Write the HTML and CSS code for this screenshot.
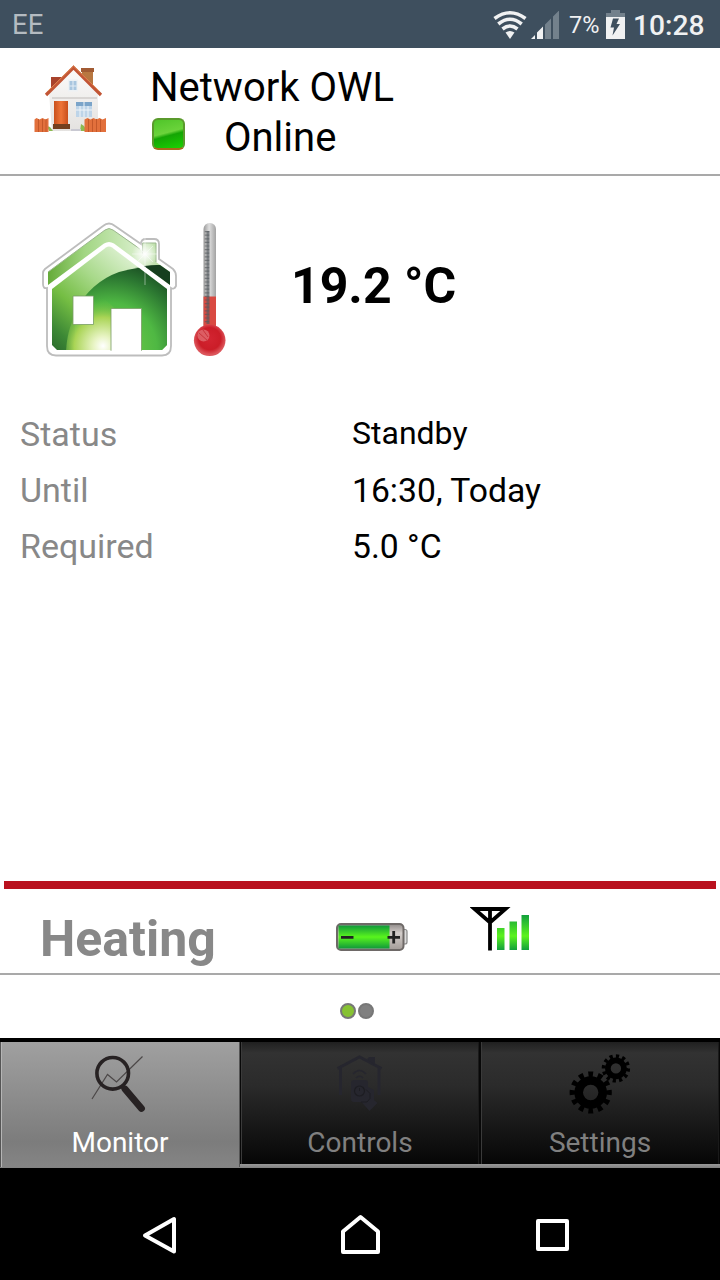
FILE: index.html
```html
<!DOCTYPE html>
<html>
<head>
	<meta charset="utf-8">
	<meta name="viewport" content="width=device-width, initial-scale=1.0">
	<title>Network OWL</title>
	<link rel="stylesheet" href="styles.css">
</head>
<body>
<div class="statusbar">
	<span class="carrier">EE</span>
	<svg class="wifi" width="36" height="30" viewBox="492 10 36 30">
		<g fill="none" stroke="#f0f1f2" stroke-width="3.6">
			<path d="M494.5 18.5Q510 7 525.500 18.500"/>
			<path d="M498.300 24Q510 14.500 521.700 24"/>
			<path d="M502.500 29Q510 23 517.500 29"/>
		</g>
		<path d="M505.500 32.500Q510 29.500 514.500 32.500L510 39z" fill="#f0f1f2"/>
	</svg>
	<svg class="cell" width="28" height="29" viewBox="531 11 28 29">
		<path d="M531 39L535 35V39zM537 39V32.500L543 26.500V39z" fill="#f0f1f2"/>
		<path d="M545 39V24.500L551 18.500V39zM553 39V16.500L559 10.500V39z" fill="#73818c"/>
	</svg>
	<span class="percent">7%</span>
	<svg class="charge" width="20" height="30" viewBox="606 9 20 30">
		<path d="M611 9h9v3h5v4H606V12h5z" fill="#73818c"/>
		<path d="M606 16h19v22H606z" fill="#f0f1f2"/>
		<path d="M613 17.500h6L616.500 23H620L612.500 34.500 614 26.500H610.500z" fill="#3e4f5e"/>
	</svg>
	<span class="clock">10:28</span>
</div>

<div class="header">
	<svg class="logo" width="76" height="72" viewBox="32 64 76 72">
		<defs>
			<linearGradient id="door" x2="1" y2="0"><stop offset="0" stop-color="#c9501b"/><stop offset=".5" stop-color="#ee7438"/><stop offset="1" stop-color="#c94f1c"/></linearGradient>
			<linearGradient id="wall" x2="0" y2="1"><stop offset="0" stop-color="#fbfaf9"/><stop offset="1" stop-color="#e4e2e0"/></linearGradient>
		</defs>
		<path d="M51 77h12v6L51 92z" fill="#a8432c"/>
		<path d="M82 69h11v18L82 78z" fill="#b87740"/>
		<path d="M81 68h13v4H81z" fill="#a25b33"/>
		<path d="M49 93L74 69 98 93V131H52z" fill="url(#wall)"/>
		<path d="M52 98h45" stroke="#d0cdca" stroke-width="1.500"/>
		<path d="M46 95L73.500 67.500 101 95" fill="none" stroke="#c25535" stroke-width="3.200"/>
		<path d="M48 91L73.500 66 99 91" fill="none" stroke="#e08a52" stroke-width="1"/>
		<path d="M68 79.500h10v12H68z" fill="#edf1f4"/>
		<path d="M69.500 81h7v9h-7z" fill="#a9c6df"/>
		<path d="M73 81v9M69.500 86h7" stroke="#e4edf5" stroke-width="1"/>
		<path d="M54 101h14v23H54z" fill="url(#door)"/>
		<path d="M53 124h17v5H53z" fill="#74401f"/>
		<path d="M76 102h16v15H76z" fill="#bed4e8"/>
		<path d="M76 102h16v4H76z" fill="#7ba4c9"/>
		<path d="M84 102v15M76 110h16M80 106v11M88 106v11" stroke="#eff4f8" stroke-width="1"/>
		<path d="M49 131l-2-5 3 1 3 4zM80 131l1-7 3 2 3 5z" fill="#8cb951"/>
		<path d="M34.500 119.500l2-1.500 3 1.500 3-1.500 3 1.500 3-1.500V132h-14zM84.500 119.500l3-1.500 3 1.500 3-1.500 3 1.500 3-1.500 3 1.500 3.500-1.500V132h-21.500z" fill="#e2703c"/>
		<path d="M38.500 119v13M42.500 119v13M46 119v13M88.500 119v13M92.500 119v13M96.500 119v13M100.500 119v13" stroke="#c4582a" stroke-width="1"/>
		<path d="M71 130h10" stroke="#c9c9d2" stroke-width="2"/>
	</svg>
	<div class="device">
		<div class="name">Network OWL</div>
		<div class="online">
			<span class="led"></span>
			<span>Online</span>
		</div>
	</div>
</div>

<div class="current">
	<svg width="192" height="140" viewBox="40 220 192 140">
		<defs>
			<linearGradient id="roof" x2="1" y2="0"><stop offset="0" stop-color="#65ab38"/><stop offset=".3" stop-color="#a2d683"/><stop offset=".75" stop-color="#d9efcc"/><stop offset="1" stop-color="#a8d48f"/></linearGradient>
			<linearGradient id="light" gradientUnits="userSpaceOnUse" x1="50" y1="350" x2="135" y2="255"><stop offset="0" stop-color="#2a6a2d"/><stop offset=".15" stop-color="#3c8835"/><stop offset=".38" stop-color="#74bd43"/><stop offset=".65" stop-color="#a8d98a"/><stop offset="1" stop-color="#e2f3d8"/></linearGradient>
			<radialGradient id="dark" gradientUnits="userSpaceOnUse" cx="110" cy="350" r="98"><stop offset="0" stop-color="#79cf48"/><stop offset=".48" stop-color="#4fb843"/><stop offset=".75" stop-color="#2b7631"/><stop offset="1" stop-color="#123a1c"/></radialGradient>
			<radialGradient id="glow" gradientUnits="userSpaceOnUse" cx="103" cy="346" r="48"><stop offset="0" stop-color="#fff"/><stop offset=".2" stop-color="#e8f4c4"/><stop offset=".6" stop-color="#a9d455"/><stop offset="1" stop-color="#55b43d" stop-opacity="0"/></radialGradient>
			<radialGradient id="star"><stop offset="0" stop-color="#fff"/><stop offset="1" stop-color="#fff" stop-opacity="0"/></radialGradient>
			<linearGradient id="tube" x2="1" y2="0"><stop offset="0" stop-color="#999"/><stop offset=".45" stop-color="#dedede"/><stop offset="1" stop-color="#a2a2a2"/></linearGradient>
			<radialGradient id="bulb" cx=".5" cy=".45"><stop offset="0" stop-color="#d32431"/><stop offset=".7" stop-color="#cb1d28"/><stop offset="1" stop-color="#dc555b"/></radialGradient>
			<clipPath id="inner"><path d="M52 289L106 247.500Q109 245.500 112 247.500L167 289V345L162 350H57L52 345z"/></clipPath>
		</defs>
		<path d="M43 273Q43 271 45 269L103 226Q109 221 115 226L141 244Q141 239 146 239H154Q159 239 159 244V259L173 269Q176 272 176 276V286Q174 290 171 288V346Q171 355.500 162 355.500H56Q47 355.500 47 346V288Q43 289 43 284z" fill="#fff" stroke="#bdbdbd" stroke-width="1.800"/>
		<path d="M48 272L105 230Q109 227 113 230L142 250V243H156V262L170 272V285L114 243.500Q109 240.500 104 243.500L48 285z" fill="url(#roof)"/>
		<path d="M144 266Q154 264.500 160 265L170 272V285z" fill="#163f1e"/>
		<path d="M48 272L105 230Q109 227 113 230L140 249M142.500 254V243H156V262" fill="none" stroke="#9bb78e" stroke-width="1"/>
		<g clip-path="url(#inner)">
			<path d="M50 240H170V352H50z" fill="url(#light)"/>
			<path d="M75 311Q91 282 119 272Q142 265 170 266V352H75z" fill="url(#dark)"/>
			<path d="M66 352C67 328 76 304 94 295Q122 302 134 352z" fill="url(#glow)"/>
		</g>
		<path d="M73 296h20.500v28.500H73zM111 308.500h30.500V352H111z" fill="#fff" stroke="#799d65" stroke-width=".8"/>
		<path d="M110 350.800h32.500v3H110z" fill="#fff"/>
		<circle cx="145" cy="254" r="13" fill="url(#star)"/>
		<path d="M145 238V285M132 254h26M137 246l16 16M137 262l16-16" stroke="#fff" stroke-width=".7" opacity=".65"/>
		<rect x="203.500" y="223" width="12.500" height="108" rx="6" fill="url(#tube)"/>
		<path d="M203.500 296.500h12.500V330h-12.500z" fill="#d94a42"/>
		<path d="M207 231V324" stroke="#51565a" stroke-width="4.500" stroke-dasharray="1.200 2.400" opacity=".6"/>
		<path d="M208 231V324" stroke="#555b60" stroke-width="3" opacity=".65"/>
		<circle cx="209.700" cy="340.300" r="15.800" fill="url(#bulb)"/>
		<circle cx="203.500" cy="335.500" r="6" fill="#e27377" opacity=".75"/>
		<path d="M199 333l9 8M203 330l5 7" stroke="#c9353c" stroke-width="1"/>
	</svg>
	<span class="temp">19.2 °C</span>
</div>

<div class="details">
	<span class="label">Status</span><span class="value small">Standby</span>
	<span class="label">Until</span><span class="value">16:30, Today</span>
	<span class="label">Required</span><span class="value">5.0 °C</span>
</div>

<div class="redline"></div>
<div class="zone">
	<span class="title">Heating</span>
	<svg class="battery" width="76" height="34" viewBox="334 920 76 34">
		<defs>
			<linearGradient id="cellg" x2="0" y2="1"><stop offset="0" stop-color="#10993a"/><stop offset=".5" stop-color="#59f51d"/><stop offset="1" stop-color="#10993a"/></linearGradient>
			<linearGradient id="metal" x2="0" y2="1"><stop offset="0" stop-color="#8f8a88"/><stop offset=".35" stop-color="#d4cecb"/><stop offset="1" stop-color="#a39c98"/></linearGradient>
		</defs>
		<rect x="401" y="929.500" width="6" height="14.500" rx="2" fill="#ddd" stroke="#888" stroke-width="1.200"/>
		<rect x="337" y="924" width="66.500" height="26" rx="4" fill="url(#metal)" stroke="#6e6967" stroke-width="2"/>
		<path d="M338.500 925.500h51v23h-51z" fill="url(#cellg)"/>
		<path d="M341 937.300h12.500M387.500 937.300h12.500M393.700 931v12.500" stroke="#222" stroke-width="2.800"/>
	</svg>
	<svg class="signal" width="62" height="48" viewBox="470 905 62 48">
		<defs>
			<linearGradient id="bar" x2="0" y2="1"><stop offset="0" stop-color="#12a03c"/><stop offset=".6" stop-color="#5cf31e"/><stop offset="1" stop-color="#12a03c"/></linearGradient>
		</defs>
		<path d="M474.500 909H505.500L490 922.500zM490 908V950.500" fill="none" stroke="#000" stroke-width="3.800"/>
		<path d="M497 928h7.500v22H497zM509.500 921.500h7.500V950h-7.500zM521.500 915h7.500v35h-7.500z" fill="url(#bar)"/>
	</svg>
</div>

<div class="pager">
	<span class="dot on"></span>
	<span class="dot"></span>
</div>

<div class="tabs">
	<div class="tab active">
		<svg width="64" height="64" viewBox="88 1052 64 64">
			<path d="M92 1099L107.500 1074.500 116.500 1082 142.500 1056.500" fill="none" stroke="#4c4848" stroke-width="1.200"/>
			<circle cx="112.700" cy="1073.300" r="15.800" fill="none" stroke="#272223" stroke-width="3.600"/>
			<path d="M122 1085.500l2 3" stroke="#272223" stroke-width="4.500"/>
			<path d="M125 1089L141.500 1108.500" stroke="#272223" stroke-width="6.800" stroke-linecap="round"/>
		</svg>
		<span>Monitor</span>
	</div>
	<div class="tab">
		<svg width="64" height="64" viewBox="328 1052 64 64">
			<g fill="none" stroke="#26262e" stroke-width="3">
				<path d="M340.500 1095V1067M379 1095V1067M337.500 1068.500L359.500 1057 381.500 1068.500"/>
				<path d="M353 1074Q359.500 1067 366 1074M356 1078Q359.500 1074.500 363 1078" stroke-width="1.600"/>
			</g>
			<path d="M367 1059l2-2h6v8z" fill="#26262e"/>
			<path d="M351 1083q0-3 3-3h11q3 0 3 3v4l6 3v10l3.500 3-8 8-8-9H354q-3 0-3-3z" fill="#26262e"/>
			<circle cx="359.500" cy="1091" r="5" fill="none" stroke="#1d1d22" stroke-width="1.200"/>
			<path d="M359.500 1088v3M366 1089.500l4 4v5l-3 3.500h-6" fill="none" stroke="#1d1d22" stroke-width="1"/>
		</svg>
		<span>Controls</span>
	</div>
	<div class="tab">
		<svg width="64" height="64" viewBox="568 1052 64 64">
			<g fill="none" stroke="#000">
				<circle cx="590.700" cy="1092.500" r="12" stroke-width="8.600"/>
				<circle cx="590.700" cy="1092.500" r="18.300" stroke-width="5.600" pathLength="24" stroke-dasharray="1 1" stroke-dashoffset=".5"/>
				<circle cx="615.900" cy="1068.400" r="8" stroke-width="5.600"/>
				<circle cx="615.900" cy="1068.400" r="12.200" stroke-width="4" pathLength="24" stroke-dasharray="1 1"/>
			</g>
		</svg>
		<span>Settings</span>
	</div>
</div>

<div class="navbar">
	<svg width="36" height="40" viewBox="142 1215 36 40"><path d="M145 1235.500L174 1219V1251.500z"/></svg>
	<svg class="home" width="42" height="42" viewBox="340 1214 42 42"><path d="M343 1252V1231.500L360.500 1217 378 1231.500V1252z"/></svg>
	<svg width="36" height="36" viewBox="535 1217 36 36"><path d="M538 1221h29v28h-29z"/></svg>
</div>
</body>
</html>
```
FILE: styles.css
```css
body{
	margin:0;
	width:720px;
	height:1280px;
	overflow:hidden;
	background:white;
	color:black;
	font-family:Roboto, sans-serif;
	display:flex;
	flex-direction:column;
}
svg{
	display:block;
	flex:none;
}
.statusbar{
	box-sizing:border-box;
	height:48px;
	padding:2px 16px 0 12px;
	display:flex;
	align-items:center;
	background:#3e4f5e;
	color:#f0f1f2;
	line-height:52px;
	white-space:nowrap;
}
.carrier{
	flex:1;
	font-size:27.5px;
	color:#b4bbc1;
}
.wifi{
	margin-right:3px;
}
.cell{
	margin-right:10px;
}
.percent{
	width:37px;
	font-size:23.5px;
}
.charge{
	margin-top:-1px;
}
.clock{
	width:71px;
	margin:2px 0 0 7px;
	font-size:28.2px;
	font-weight:500;
}
.header{
	box-sizing:border-box;
	height:128px;
	padding:16px 0 0 32px;
	display:flex;
	border-bottom:2px solid #a9a9a9;
}
.device{
	margin-left:42px;
	font-size:40px;
	line-height:50px;
	margin-top:-1px;
}
.online{
	display:flex;
}
.led{
	box-sizing:border-box;
	width:33px;
	height:32px;
	margin:5px 39px 0 2px;
	border:2px solid #5a9a2c;
	border-bottom-color:#a8691c;
	border-radius:6px;
	background:linear-gradient(165deg, #4fc529 0%, #6bd33b 45%, #14a504 55%, #1bd202 100%);
}
.current{
	height:140px;
	margin:44px 0 0 40px;
	display:flex;
}
.temp{
	margin-left:59px;
	font-size:50px;
	font-weight:bold;
	line-height:132px;
}
.details{
	margin:46px 0 0 20px;
	display:grid;
	grid-template-columns:332px auto;
	grid-auto-rows:56px;
	font-size:34px;
	line-height:56px;
}
.label{
	color:#888;
}
.value{
	font-size:33.7px;
	line-height:58px;
}
.value.small{
	font-size:32px;
	line-height:55px;
}
.redline{
	height:8px;
	margin:auto 4px 0;
	background:#b9111e;
}
.zone{
	box-sizing:border-box;
	height:86px;
	padding-left:40px;
	display:flex;
	border-bottom:2px solid #a9a9a9;
}
.title{
	width:294px;
	font-size:50px;
	font-weight:bold;
	line-height:100px;
	color:#888;
}
.battery{
	margin-top:31px;
}
.signal{
	margin:16px 0 0 60px;
}
.pager{
	height:63px;
	padding-left:340px;
	display:flex;
	align-items:center;
	gap:2px;
}
.dot{
	box-sizing:border-box;
	width:16px;
	height:16px;
	margin-top:9px;
	border:2px solid #777;
	border-radius:50%;
	background:#808080;
}
.dot.on{
	background:#86c232;
}
.tabs{
	box-sizing:border-box;
	height:130px;
	padding-top:4px;
	display:flex;
	background:linear-gradient(#000 126px, #999 126px, #808080 130px);
}
.tab{
	box-sizing:border-box;
	width:240px;
	height:122px;
	padding-top:10px;
	display:flex;
	flex-direction:column;
	align-items:center;
	border-left:1px solid #080808;
	border-right:1px solid #080808;
	box-shadow:inset 1px 0 #3a3a3a, inset -1px 0 #1a1a1a;
	background:linear-gradient(#202020 0, #323232 9%, #2b2b2b 35%, #060606 100%);
	font-size:28px;
	line-height:52px;
	color:#808080;
}
.tab svg{
	margin-bottom:1px;
}
.tab.active{
	height:125px;
	border-color:#666 #555;
	box-shadow:inset 1px 0 #b5b5b5;
	background:linear-gradient(#a0a0a0, #7c7c7c 80%, #858585);
	color:white;
}
.navbar{
	flex:none;
	height:112px;
	box-sizing:border-box;
	padding:22px 149px 0 142px;
	display:flex;
	align-items:center;
	justify-content:space-between;
	background:#000;
}
.home{
	margin-left:8px;
}
.navbar path{
	fill:none;
	stroke:white;
	stroke-width:4;
	stroke-linejoin:round;
}
```
